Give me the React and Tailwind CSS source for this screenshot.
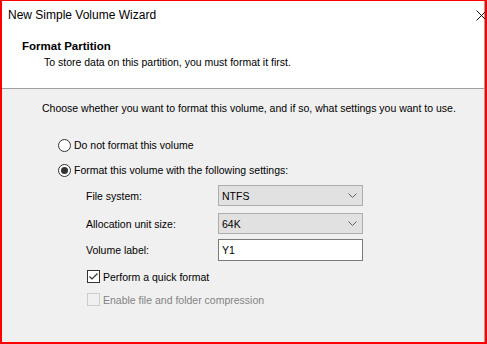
import React from "react";

const Radio = ({ checked, label }) => (
  <div className="flex items-center h-4">
    <span className="w-[13px] h-[13px] rounded-full border border-[#333333] bg-white flex items-center justify-center">
      {checked && <span className="w-[7px] h-[7px] rounded-full bg-[#333333]" />}
    </span>
    <span className="ml-[3px] text-black">{label}</span>
  </div>
);

const Check = ({ checked, disabled, label }) => (
  <div className="flex items-center h-[13px]">
    <span
      className={
        disabled
          ? "w-[13px] h-[13px] border border-[#cccccc] bg-[#f0f0f0]"
          : "w-[13px] h-[13px] border border-[#333333] bg-white flex items-center justify-center"
      }
    >
      {checked && (
        <svg width="11" height="11" viewBox="0 0 11 11">
          <path d="M1.5 5.5 L4 8 L9.5 2.5" fill="none" stroke="#333333" strokeWidth="1.2" />
        </svg>
      )}
    </span>
    <span className={disabled ? "ml-[3px] text-[#838383]" : "ml-[3px] text-black"}>{label}</span>
  </div>
);

const Combo = ({ value }) => (
  <div className="w-[145px] h-[21px] bg-[#e1e1e1] border border-[#adadad] flex items-center justify-between pl-[3px] pr-[5px]">
    <span className="text-black">{value}</span>
    <svg width="9" height="5" viewBox="0 0 9 5">
      <path d="M0.5 0.5 L4.5 4.5 L8.5 0.5" fill="none" stroke="#606060" strokeWidth="1" />
    </svg>
  </div>
);

const Row = ({ label, children }) => (
  <div className="flex items-center">
    <span className="w-[132px] text-black">{label}</span>
    {children}
  </div>
);

export default function App() {
  return (
    <div
      className="w-[487px] h-[344px] overflow-hidden border-[#ff0000] border-l-2 border-r-2 border-b-2 border-t flex flex-col text-[10.5px] leading-4"
      style={{ fontFamily: '"Liberation Sans", Arial, sans-serif' }}
    >
      <div className="flex-1 flex flex-col border-r border-[#a0a0a0]">
        <div className="bg-white border-b border-[#a0a0a0] h-[88px] flex flex-col">
          <div className="h-[27px] flex items-center justify-between pl-[6px]">
            <span className="text-[12px] text-black">New Simple Volume Wizard</span>
            <svg width="11" height="11" viewBox="0 0 11 11" className="mr-[-3px] mt-[1px]">
              <path d="M0.5 0.5 L10.5 10.5 M10.5 0.5 L0.5 10.5" stroke="#111111" strokeWidth="1" />
            </svg>
          </div>
          <div className="mt-[10px] pl-[20px] font-bold text-[11.5px] text-black">Format Partition</div>
          <div className="pl-[42px] text-black">To store data on this partition, you must format it first.</div>
        </div>
        <div className="flex-1 bg-[#f0f0f0] flex flex-col pt-[11px]">
          <div className="pl-[40px] text-black">
            Choose whether you want to format this volume, and if so, what settings you want to use.
          </div>
          <div className="pl-[56px] mt-[21px] flex flex-col gap-[9px]">
            <Radio label="Do not format this volume" />
            <Radio checked label="Format this volume with the following settings:" />
          </div>
          <div className="pl-[84px] mt-[7px] flex flex-col">
            <Row label="File system:">
              <Combo value="NTFS" />
            </Row>
            <div className="mt-[7px]">
              <Row label="Allocation unit size:">
                <Combo value="64K" />
              </Row>
            </div>
            <div className="mt-[5px]">
              <Row label="Volume label:">
                <div className="w-[145px] h-[22px] bg-white border border-[#7a7a7a] flex items-center pl-[3px] text-black">
                  Y1
                </div>
              </Row>
            </div>
            <div className="mt-[9px] flex flex-col gap-[10px] pl-[1px]">
              <Check checked label="Perform a quick format" />
              <Check disabled label="Enable file and folder compression" />
            </div>
          </div>
        </div>
      </div>
    </div>
  );
}
